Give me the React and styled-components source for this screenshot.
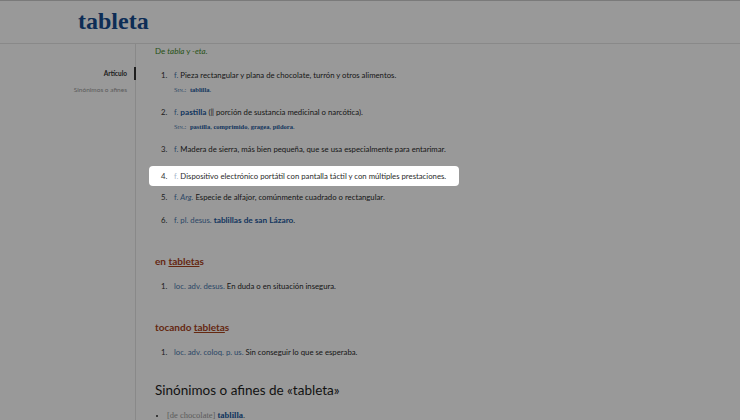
import React from "react";
import styled, { createGlobalStyle } from "styled-components";

const Global = createGlobalStyle`
  html, body { margin: 0; padding: 0; background: #fff; }
  body { font-family: Lato, "Open Sans", sans-serif; color: #2a2a2a; }
`;

export default function App() {
  return (
    <Page>
      <Global />
      <Header>
        <Title>tableta</Title>
      </Header>
      <Body>
        <Sidebar>
          <NavItem $active>Artículo</NavItem>
          <NavItem>Sinónimos o afines</NavItem>
        </Sidebar>
        <Main>
          <Etym>
            De <i>tabla</i> y <i>‑eta</i>.
          </Etym>
          <Senses>
            <Sense>
              <Num>1.</Num>
              <div>
                <Abbr>f.</Abbr> Pieza rectangular y plana de chocolate, turrón y otros alimentos.
                <Syn>
                  <SynLabel>Sin.:</SynLabel> <SynWord>tablilla</SynWord>.
                </Syn>
              </div>
            </Sense>
            <Sense>
              <Num>2.</Num>
              <div>
                <Abbr>f.</Abbr> <Link>pastilla</Link> (‖ porción de sustancia medicinal o narcótica).
                <Syn>
                  <SynLabel>Sin.:</SynLabel> <SynWord>pastilla</SynWord>, <SynWord>comprimido</SynWord>,{" "}
                  <SynWord>gragea</SynWord>, <SynWord>píldora</SynWord>.
                </Syn>
              </div>
            </Sense>
            <Sense>
              <Num>3.</Num>
              <div>
                <Abbr>f.</Abbr> Madera de sierra, más bien pequeña, que se usa especialmente para entarimar.
              </div>
            </Sense>
            <Sense $highlight>
              <Num>4.</Num>
              <div>
                <Abbr $light>f.</Abbr> Dispositivo electrónico portátil con pantalla táctil y con múltiples prestaciones.
              </div>
            </Sense>
            <Sense>
              <Num>5.</Num>
              <div>
                <Abbr>f.</Abbr> <Abbr><i>Arg.</i></Abbr> Especie de alfajor, comúnmente cuadrado o rectangular.
              </div>
            </Sense>
            <Sense>
              <Num>6.</Num>
              <div>
                <Abbr>f. pl. desus.</Abbr> <Link>tablillas de san Lázaro</Link>.
              </div>
            </Sense>
          </Senses>

          <Phrase>
            en <u>tableta</u>s
          </Phrase>
          <Senses>
            <Sense>
              <Num>1.</Num>
              <div>
                <Abbr>loc. adv. desus.</Abbr> En duda o en situación insegura.
              </div>
            </Sense>
          </Senses>

          <Phrase>
            tocando <u>tableta</u>s
          </Phrase>
          <Senses>
            <Sense>
              <Num>1.</Num>
              <div>
                <Abbr>loc. adv. coloq. p. us.</Abbr> Sin conseguir lo que se esperaba.
              </div>
            </Sense>
          </Senses>

          <SynHeading>Sinónimos o afines de «tableta»</SynHeading>
          <Bullets>
            <li>
              <Context>[de chocolate]</Context> <SynWord $big>tablilla</SynWord>.
            </li>
          </Bullets>
        </Main>
      </Body>
      <Dim />
    </Page>
  );
}

const Page = styled.div`
  width: 740px;
  height: 420px;
  overflow: hidden;
  position: relative;
`;
const Header = styled.header`
  height: 44px;
  border-top: 1px solid #ccc;
  border-bottom: 1px solid #e4e4e4;
  padding-left: 78px;
  box-sizing: border-box;
  display: flex;
  align-items: center;
`;
const Title = styled.h1`
  margin: 0;
  font-family: "Liberation Serif", serif;
  font-weight: bold;
  font-size: 24px;
  color: #164b8f;
  line-height: 1;
  margin-top: -2px;
`;
const Body = styled.div`
  display: flex;
`;
const Sidebar = styled.nav`
  width: 135px;
  flex-shrink: 0;
  border-right: 1px solid #e4e4e4;
  min-height: 380px;
  padding-top: 23px;
  display: flex;
  flex-direction: column;
  align-items: flex-end;
  gap: 3px;
`;
const NavItem = styled.div`
  font-size: 6.5px;
  line-height: 13px;
  padding-right: 7px;
  margin-right: -1px;
  border-right: 2px solid ${(p) => (p.$active ? "#333" : "transparent")};
  font-weight: ${(p) => (p.$active ? "bold" : "normal")};
  color: ${(p) => (p.$active ? "#333" : "#999")};
`;
const Main = styled.main`
  padding: 1px 0 0 19px;
  font-size: 7.75px;
`;
const Etym = styled.div`
  color: #3f8a28;
  font-size: 8px;
  line-height: 12px;
  margin-bottom: 12px;
`;
const Senses = styled.div`
  padding-left: 6px;
`;
const Sense = styled.div`
  display: grid;
  grid-template-columns: 13px auto;
  line-height: 12px;
  margin-bottom: ${(p) => (p.$highlight ? "5px" : "11px")};
  ${(p) =>
    p.$highlight &&
    `
    position: relative;
    z-index: 2;
    background: #fff;
    border-radius: 4px;
    width: fit-content;
    margin-left: -12px;
    padding: 4px 13px 4px 12px;
  `}
`;
const Num = styled.span`
  color: #333;
`;
const Abbr = styled.span`
  color: ${(p) => (p.$light ? "#a9b8cc" : "#4a78ad")};
`;
const Link = styled.span`
  color: #235a9e;
  font-weight: bold;
  font-size: 8.25px;
`;
const Syn = styled.div`
  margin-top: 4px;
  line-height: 10px;
  font-family: "Liberation Serif", serif;
  font-size: 6.5px;
  color: #235a9e;
`;
const SynLabel = styled.span`
  font-variant: small-caps;
  color: #4a78ad;
  margin-right: 2px;
`;
const SynWord = styled.span`
  font-family: "Liberation Serif", serif;
  font-weight: bold;
  color: #235a9e;
  font-size: ${(p) => (p.$big ? "8.5px" : "inherit")};
`;
const Phrase = styled.h3`
  margin: 28px 0 12px;
  font-size: 10px;
  line-height: 14px;
  font-weight: bold;
  color: #a9431b;
  u {
    text-decoration-thickness: 1px;
    text-underline-offset: 1px;
  }
`;
const SynHeading = styled.h2`
  margin: 23px 0 10px;
  font-size: 13.5px;
  line-height: 18px;
  font-weight: normal;
  color: #1e1e1e;
`;
const Bullets = styled.ul`
  margin: 0;
  padding-left: 12px;
  font-family: "Liberation Serif", serif;
  font-size: 8.5px;
  line-height: 12px;
  li::marker {
    font-size: 7px;
  }
`;
const Context = styled.span`
  color: #9a9a9a;
`;
const Dim = styled.div`
  position: absolute;
  inset: 0;
  z-index: 1;
  background: rgba(0, 0, 0, 0.4);
`;
